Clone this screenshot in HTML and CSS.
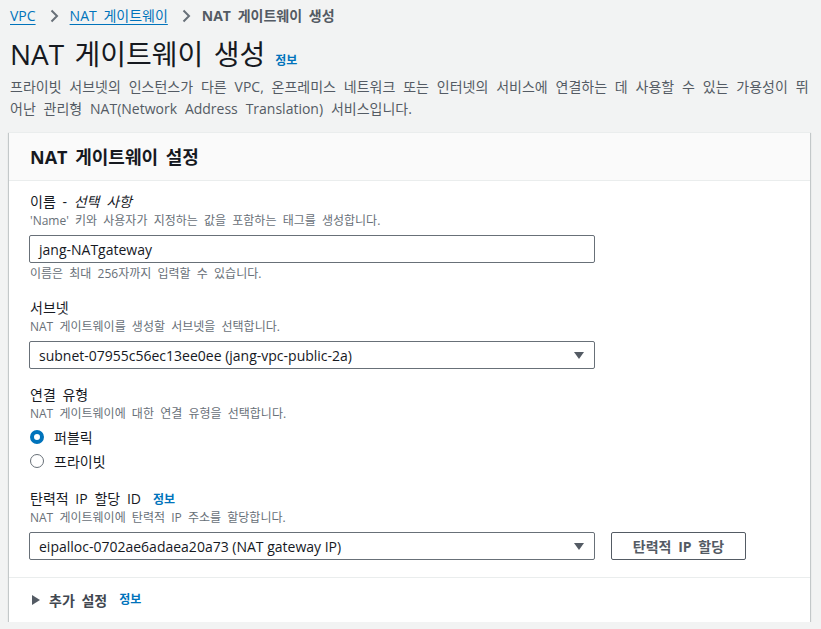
FILE: index.html
```html
<!DOCTYPE html>
<html lang="ko">
<head>
<meta charset="utf-8">
<title>NAT 게이트웨이 생성</title>
<link rel="stylesheet" href="styles.css">
</head>
<body>
<div class="page">
  <nav class="crumbs">
    <a class="crumb-link">VPC</a>
    <svg class="chev" width="16" height="16" viewBox="0 0 16 16"><path d="M5.5 2.5 11 8l-5.5 5.5" fill="none" stroke="#687078" stroke-width="2"/></svg>
    <a class="crumb-link">NAT 게이트웨이</a>
    <svg class="chev" width="16" height="16" viewBox="0 0 16 16"><path d="M5.5 2.5 11 8l-5.5 5.5" fill="none" stroke="#687078" stroke-width="2"/></svg>
    <span class="crumb-current">NAT 게이트웨이 생성</span>
  </nav>

  <header class="page-head">
    <h1 class="title">NAT 게이트웨이 생성 <span class="info">정보</span></h1>
    <p class="lead">프라이빗 서브넷의 인스턴스가 다른 VPC, 온프레미스 네트워크 또는 인터넷의 서비스에 연결하는 데 사용할 수 있는 가용성이 뛰어난 관리형 NAT(Network Address Translation) 서비스입니다.</p>
  </header>

  <section class="card">
    <div class="card-head">NAT 게이트웨이 설정</div>
    <div class="card-body">
      <div class="field">
        <div class="label">이름 - <i>선택 사항</i></div>
        <div class="desc">'Name' 키와 사용자가 지정하는 값을 포함하는 태그를 생성합니다.</div>
        <div class="input">jang-NATgateway</div>
        <div class="hint">이름은 최대 256자까지 입력할 수 있습니다.</div>
      </div>

      <div class="field">
        <div class="label">서브넷</div>
        <div class="desc">NAT 게이트웨이를 생성할 서브넷을 선택합니다.</div>
        <div class="select"><span>subnet-07955c56ec13ee0ee (jang-vpc-public-2a)</span><span class="caret"></span></div>
      </div>

      <div class="field">
        <div class="label">연결 유형</div>
        <div class="desc">NAT 게이트웨이에 대한 연결 유형을 선택합니다.</div>
        <div class="radios">
          <div class="radio-row"><span class="radio checked"></span>퍼블릭</div>
          <div class="radio-row"><span class="radio"></span>프라이빗</div>
        </div>
      </div>

      <div class="field">
        <div class="label">탄력적 IP 할당 ID<span class="info">정보</span></div>
        <div class="desc">NAT 게이트웨이에 탄력적 IP 주소를 할당합니다.</div>
        <div class="select-row">
          <div class="select"><span>eipalloc-0702ae6adaea20a73 (NAT gateway IP)</span><span class="caret"></span></div>
          <button class="btn">탄력적 IP 할당</button>
        </div>
      </div>
    </div>
    <div class="card-foot">
      <span class="tri"></span><span class="foot-label">추가 설정</span><span class="info">정보</span>
    </div>
  </section>
</div>
</body>
</html>
```

FILE: styles.css
```css
* { box-sizing: border-box; }
html, body { margin: 0; padding: 0; }
body {
  background: #f2f3f3;
  font-family: "Open Sans", "Noto Sans CJK KR", sans-serif;
  color: #16191f;
  font-size: 14px;
  word-spacing: 0.22em;
}
.page { padding: 0 11px 0 10px; }

.crumbs {
  display: flex;
  align-items: center;
  height: 32px;
  font-size: 14px;
  line-height: 20px;
}
.crumb-link {
  color: #0073bb;
  text-decoration: underline;
  text-underline-offset: 3px;
}
.chev { margin: 0 8px 0 10px; }
.crumb-current { color: #545b64; font-weight: 700; }

.page-head { padding-top: 4px; }
.title {
  margin: 0;
  font-size: 28px;
  font-weight: 400;
  line-height: 36px;
  display: flex;
  align-items: baseline;
}
.title .info { margin-left: 10px; }
.info {
  color: #0073bb;
  font-size: 12px;
  font-weight: 700;
  line-height: 16px;
  word-spacing: 0;
}
.lead {
  margin: 4px 0 0;
  color: #545b64;
  font-size: 14px;
  line-height: 22px;
  word-spacing: 0.3em;
}

.card {
  margin-top: 12px;
  margin-left: -1px;
  background: #fff;
  border-top: 1px solid #eaeded;
  box-shadow: 0 1px 1px 0 rgba(0,28,36,.3), 1px 1px 1px 0 rgba(0,28,36,.15), -1px 1px 1px 0 rgba(0,28,36,.15);
}
.card-head {
  background: #fafafa;
  border-bottom: 1px solid #eaeded;
  height: 48px;
  display: flex;
  align-items: center;
  padding: 0 0 2px 21px;
  font-size: 18px;
  font-weight: 700;
}
.card-body {
  padding: 10px 20px 17px 21px;
  border-bottom: 1px solid #eaeded;
}
.field + .field { margin-top: 15px; }
.label { display: flex; align-items: baseline; height: 22px; line-height: 22px; font-size: 14px; white-space: pre; }
.label .info { margin-left: 12px; }
.desc, .hint {
  color: #687078;
  font-size: 12px;
  line-height: 16px;
}
.hint { margin-top: 3px; }
.input, .select {
  margin-top: 6px;
  width: 566px;
  height: 28px;
  border: 1px solid #687078;
  border-radius: 2px;
  padding: 0 9px;
  display: flex;
  align-items: center;
  font-size: 14px;
  margin-left: -1px;
  word-spacing: 0;
}
.select { justify-content: space-between; }
.caret {
  width: 0; height: 0;
  border-left: 5px solid transparent;
  border-right: 5px solid transparent;
  border-top: 7px solid #545b64;
  margin-right: 1px;
}
.select-row { display: flex; gap: 16px; align-items: flex-start; }
.btn {
  margin-top: 6px;
  height: 28px;
  width: 135px;
  background: #fff;
  border: 1px solid #545b64;
  border-radius: 2px;
  color: #545b64;
  font-family: inherit;
  font-size: 14px;
  font-weight: 700;
  word-spacing: 0.22em;
  padding: 0;
}
.radios { margin-top: 3px; }
.radio-row {
  display: flex;
  align-items: center;
  height: 24px;
  font-size: 14px;
}
.radio {
  width: 14px; height: 14px;
  border-radius: 50%;
  border: 1px solid #687078;
  margin: 0 10px 0 0;
  background: #fff;
}
.radio.checked { border: 4px solid #0073bb; }

.card-foot {
  height: 44px;
  display: flex;
  align-items: center;
  padding-left: 23px;
}
.tri {
  width: 0; height: 0;
  border-top: 5px solid transparent;
  border-bottom: 5px solid transparent;
  border-left: 8px solid #545b64;
  margin-right: 9px;
}
.foot-label { font-size: 14px; font-weight: 700; color: #414750; margin-right: 12px; }
```
